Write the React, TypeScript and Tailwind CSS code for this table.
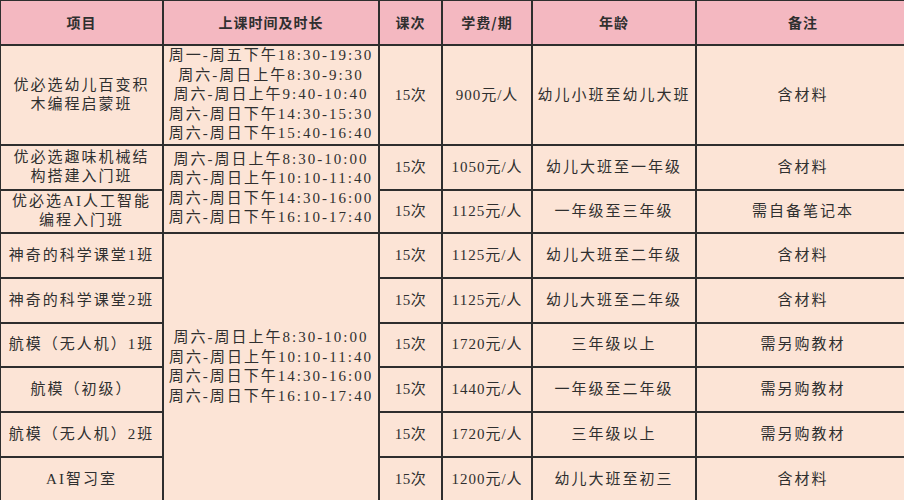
const body = '"Liberation Serif", "Noto Sans CJK SC", serif'

type Row = {
  name: string[]
  times?: string[]
  span?: number
  count: string
  fee: string
  age: string
  note: string
  h: string
}

const slotA = [
  '周六-周日上午8:30-10:00',
  '周六-周日上午10:10-11:40',
  '周六-周日下午14:30-16:00',
  '周六-周日下午16:10-17:40',
]

const rows: Row[] = [
  {
    name: ['优必选幼儿百变积', '木编程启蒙班'],
    times: [
      '周一-周五下午18:30-19:30',
      '周六-周日上午8:30-9:30',
      '周六-周日上午9:40-10:40',
      '周六-周日下午14:30-15:30',
      '周六-周日下午15:40-16:40',
    ],
    span: 1,
    count: '15次',
    fee: '900元/人',
    age: '幼儿小班至幼儿大班',
    note: '含材料',
    h: 'h-[96px]',
  },
  {
    name: ['优必选趣味机械结', '构搭建入门班'],
    times: slotA,
    span: 2,
    count: '15次',
    fee: '1050元/人',
    age: '幼儿大班至一年级',
    note: '含材料',
    h: 'h-[45px]',
  },
  { name: ['优必选AI人工智能', '编程入门班'], count: '15次', fee: '1125元/人', age: '一年级至三年级', note: '需自备笔记本', h: 'h-[43px]' },
  { name: ['神奇的科学课堂1班'], times: slotA, span: 7, count: '15次', fee: '1125元/人', age: '幼儿大班至二年级', note: '含材料', h: 'h-[45px]' },
  { name: ['神奇的科学课堂2班'], count: '15次', fee: '1125元/人', age: '幼儿大班至二年级', note: '含材料', h: 'h-[45px]' },
  { name: ['航模（无人机）1班'], count: '15次', fee: '1720元/人', age: '三年级以上', note: '需另购教材', h: 'h-[44px]' },
  { name: ['航模（初级）'], count: '15次', fee: '1440元/人', age: '一年级至二年级', note: '需另购教材', h: 'h-[45px]' },
  { name: ['航模（无人机）2班'], count: '15次', fee: '1720元/人', age: '三年级以上', note: '需另购教材', h: 'h-[45px]' },
  { name: ['AI智习室'], count: '15次', fee: '1200元/人', age: '幼儿大班至初三', note: '含材料', h: 'h-[45px]' },
]

const cell = 'border-2 border-[#2e2e2e] text-center align-middle p-0'

export default function App() {
  return (
    <div className="w-[904px] h-[500px] overflow-hidden bg-[#fce4d6]">
      <table
        className="border-collapse table-fixed -ml-[1px] -mt-[1px] w-[910px] text-[#2f2f2f] text-[15px] tracking-[2px]"
        style={{ fontFamily: body }}
      >
        <colgroup>
          <col className="w-[163px]" />
          <col className="w-[216px]" />
          <col className="w-[63px]" />
          <col className="w-[90px]" />
          <col className="w-[164px]" />
          <col className="w-[214px]" />
        </colgroup>
        <thead>
          <tr
            className="h-[45px] bg-[#f4b8c1] text-[14px] font-bold tracking-[1px]"
            style={{ fontFamily: '"Noto Sans CJK SC", sans-serif' }}
          >
            <th className={cell}>项目</th>
            <th className={cell}>上课时间及时长</th>
            <th className={cell}>课次</th>
            <th className={cell}>学费/期</th>
            <th className={cell}>年龄</th>
            <th className={cell}>备注</th>
          </tr>
        </thead>
        <tbody className="bg-[#fce4d6]">
          {rows.map((r, i) => (
            <tr key={i} className={r.h}>
              <td className={`${cell} leading-[19px]`}>
                {r.name.map((n, j) => (
                  <div key={j}>{n}</div>
                ))}
              </td>
              {r.times && (
                <td className={`${cell} leading-[19.5px]`} rowSpan={r.span}>
                  {r.times.map((t, j) => (
                    <div key={j} className="whitespace-nowrap">{t}</div>
                  ))}
                </td>
              )}
              <td className={`${cell} tracking-[0.5px]`}>{r.count}</td>
              <td className={`${cell} tracking-[1px]`}>{r.fee}</td>
              <td className={cell}>{r.age}</td>
              <td className={cell}>{r.note}</td>
            </tr>
          ))}
        </tbody>
      </table>
    </div>
  )
}
